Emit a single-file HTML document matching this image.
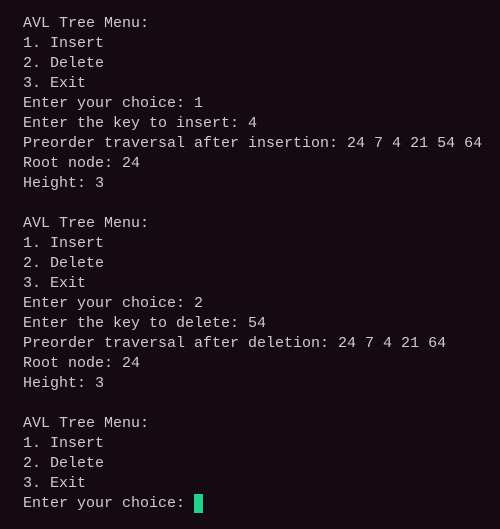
<!DOCTYPE html>
<html><head><style>
html,body{margin:0;padding:0;background:#150a12;width:500px;height:529px;overflow:hidden}
pre{margin:0;position:absolute;left:23px;top:14px;font-family:"Liberation Mono",monospace;font-size:15px;line-height:20px;color:#cccccc}
.c{display:inline-block;width:9px;height:19px;background:#23d18b;vertical-align:top;margin-top:0px}
</style></head><body>
<pre>AVL Tree Menu:
1. Insert
2. Delete
3. Exit
Enter your choice: 1
Enter the key to insert: 4
Preorder traversal after insertion: 24 7 4 21 54 64
Root node: 24
Height: 3

AVL Tree Menu:
1. Insert
2. Delete
3. Exit
Enter your choice: 2
Enter the key to delete: 54
Preorder traversal after deletion: 24 7 4 21 64
Root node: 24
Height: 3

AVL Tree Menu:
1. Insert
2. Delete
3. Exit
Enter your choice: <span class="c"></span></pre>
</body></html>
